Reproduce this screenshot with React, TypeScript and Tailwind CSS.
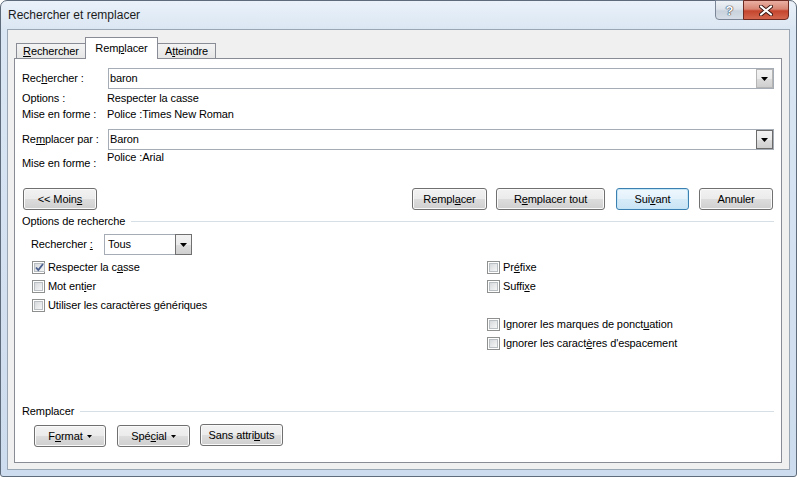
import React from "react";

const btnBg = "bg-[linear-gradient(#f2f2f2,#ebebeb_50%,#dddddd_50%,#cfcfcf)]";

function Arrow({ small }: { small?: boolean }) {
  return small ? (
    <svg width="5" height="3" viewBox="0 0 5 3" className="ml-[4px]">
      <path d="M0 0H5L2.5 3Z" fill="#000" />
    </svg>
  ) : (
    <svg width="7" height="4" viewBox="0 0 7 4">
      <path d="M0 0H7L3.5 4Z" fill="#000" />
    </svg>
  );
}

function Btn({ children, className, focused }: { children: React.ReactNode; className: string; focused?: boolean }) {
  return (
    <div
      className={
        "h-[22px] rounded-[3px] border flex items-center justify-center " +
        (focused
          ? "border-[#3c7fb1] bg-[linear-gradient(#eef7fd,#e3f1fb_50%,#d6ebf8_50%,#c9e3f5)] shadow-[inset_0_0_0_1px_#c4e5f6] "
          : "border-[#707070] " + btnBg + " shadow-[inset_0_0_0_1px_#fafafa] ") +
        className
      }
    >
      {children}
    </div>
  );
}

function Combo({ value, hot }: { value: string; hot?: boolean }) {
  return (
    <div className="flex-1 h-[21px] border border-[#a5acb5] bg-white flex items-center">
      <span className="flex-1 pl-[1px]">{value}</span>
      <div
        className={
          "w-[17px] h-[19px] border flex items-center justify-center " +
          (hot ? "border-[#6b6b6b] " : "border-[#b5b5b5] ") +
          btnBg
        }
      >
        <Arrow />
      </div>
    </div>
  );
}

function Check({ label, checked }: { label: React.ReactNode; checked?: boolean }) {
  return (
    <div className="h-[19px] flex items-center gap-[3px]">
      <span className="w-[13px] h-[13px] border border-[#8e8f8f] bg-white p-[1px] flex">
        <span className="flex-1 border border-[#b9bec3] bg-[linear-gradient(135deg,#d6d9dc,#f6f6f6)] flex items-center justify-center">
          {checked && (
            <svg width="9" height="9" viewBox="0 0 9 9">
              <path d="M1 4.5L3.3 7L8 1" stroke="#4a5f8e" strokeWidth="1.8" fill="none" />
            </svg>
          )}
        </span>
      </span>
      <span>{label}</span>
    </div>
  );
}

function Group({ title }: { title: string }) {
  return (
    <div className="h-[15px] flex items-center pl-[7px] pr-[7px]">
      <span>{title}</span>
      <div className="flex-1 h-px bg-[#d5dfe5] ml-[6px]" />
    </div>
  );
}

export default function App() {
  return (
    <div className="w-[797px] h-[477px] overflow-hidden bg-white font-['Liberation_Sans',Arial,sans-serif] text-[11px] tracking-[-0.1px] text-black leading-[15px] [&_u]:underline-offset-[1px]">
      <div className="w-[797px] h-[477px] flex flex-col rounded-t-[7px] rounded-b-[3px] border border-[#5d6b7a] bg-[linear-gradient(#eaf1f9,#dae6f3_30px,#cddcee)]">
        {/* Title bar */}
        <div className="h-[28px] flex items-start pl-[7px] pr-[7px]">
          <span className="text-[12px] tracking-normal leading-[14px] mt-[7px] text-[#1b1b1b]">Rechercher et remplacer</span>
          <div className="flex-1" />
          <div className="flex -mt-px">
            <div className="w-[29px] h-[20px] rounded-bl-[4px] border border-[#7b8796] bg-[linear-gradient(#eef2f6,#dde3ea_45%,#c9d2dc_55%,#d6dde6)] flex items-center justify-center">
              <span className="text-[13px] font-bold text-white leading-[13px] [text-shadow:0_0_1px_#2e3a48,0_0_1px_#2e3a48,0_0_1px_#2e3a48]">?</span>
            </div>
            <div className="w-[46px] h-[20px] -ml-px rounded-br-[4px] border border-[#6d2a22] bg-[linear-gradient(#eab0a3,#d88473_45%,#c5452d_55%,#d4674f)] flex items-center justify-center">
              <svg width="14" height="11" viewBox="0 0 14 11">
                <path d="M2 1.5L12 9.5M12 1.5L2 9.5" stroke="#3a1612" strokeWidth="4" strokeLinecap="round" />
                <path d="M2 1.5L12 9.5M12 1.5L2 9.5" stroke="#fff" strokeWidth="2.2" strokeLinecap="round" />
              </svg>
            </div>
          </div>
        </div>

        {/* Client area */}
        <div className="mx-[6px] h-[441px] border border-[#9aa6b4] bg-[#f0f0f0] pt-[7px] pl-[6px] pr-[7px] pb-[6px] flex flex-col">
          {/* Tabs */}
          <div className="h-[21px] flex items-end pl-[2px]">
            <div className="w-[69px] h-[15px] border-l border-t border-[#898c95] bg-[linear-gradient(#f3f3f3,#e6e6e6)] flex items-center justify-center">
              <span><u>R</u>echercher</span>
            </div>
            <div className="w-[73px] h-[22px] -mb-px relative z-10 border-l border-t border-r border-[#898c95] bg-white flex items-start justify-center pt-[3px]">
              <span>Rem<u>p</u>lacer</span>
            </div>
            <div className="w-[58px] h-[15px] border-t border-r border-[#898c95] bg-[linear-gradient(#f3f3f3,#e6e6e6)] flex items-center justify-center">
              <span>A<u>t</u>teindre</span>
            </div>
          </div>

          {/* Panel */}
          <div className="flex-1 border border-[#898c95] bg-white flex flex-col">
            <div className="mt-[9px] h-[21px] flex items-center pl-[7px] pr-[7px]">
              <span className="w-[86px]">Rec<u>h</u>ercher :</span>
              <Combo value="baron" />
            </div>
            <div className="mt-[2px] h-[15px] flex items-center pl-[7px]">
              <span className="w-[85px]">Options :</span>
              <span>Respecter la casse</span>
            </div>
            <div className="mt-[1px] h-[15px] flex items-center pl-[7px]">
              <span className="w-[85px]">Mise en forme :</span>
              <span>Police :Times New Roman</span>
            </div>
            <div className="mt-[7px] h-[21px] flex items-center pl-[7px] pr-[7px]">
              <span className="w-[86px]">Re<u>m</u>placer par :</span>
              <Combo value="Baron" hot />
            </div>
            <div className="h-[21px] flex items-start pl-[7px]">
              <span className="w-[85px] mt-[6px]">Mise en forme :</span>
              <span>Police :Arial</span>
            </div>

            {/* Action buttons */}
            <div className="mt-[17px] h-[22px] flex items-center pl-[8px] pr-[8px]">
              <Btn className="w-[74px]">&lt;&lt; Moin<u>s</u></Btn>
              <div className="flex-1" />
              <Btn className="w-[75px]">Rempl<u>a</u>cer</Btn>
              <Btn className="w-[109px] ml-[9px]">R<u>e</u>mplacer tout</Btn>
              <Btn className="w-[73px] ml-[11px]" focused>Sui<u>v</u>ant</Btn>
              <Btn className="w-[74px] ml-[10px]">Annuler</Btn>
            </div>

            <div className="mt-[4px]">
              <Group title="Options de recherche" />
            </div>

            <div className="mt-[5px] h-[21px] flex items-center pl-[16px]">
              <span className="w-[73px]">Rechercher <u>:</u></span>
              <div className="w-[88px] h-[21px] border border-[#a5acb5] bg-white flex items-center">
                <span className="flex-1 pl-[3px]">Tous</span>
                <div className="w-[17px] h-[21px] -mr-px border border-[#707070] bg-[linear-gradient(#f2f2f2,#ebebeb_50%,#dddddd_50%,#cfcfcf)] flex items-center justify-center">
                  <Arrow />
                </div>
              </div>
            </div>

            {/* Checkboxes */}
            <div className="mt-[3px] flex pl-[17px]">
              <div className="w-[455px] flex flex-col">
                <Check checked label={<>Respecter la c<u>a</u>sse</>} />
                <Check label={<>Mot ent<u>i</u>er</>} />
                <Check label={<>Utiliser les caractères <u>g</u>énériques</>} />
              </div>
              <div className="flex flex-col">
                <Check label={<>Pr<u>é</u>fixe</>} />
                <Check label={<>Suffi<u>x</u>e</>} />
                <div className="h-[19px]" />
                <Check label={<>Ignorer les marques de ponct<u>u</u>ation</>} />
                <Check label={<>Ignorer les caract<u>è</u>res d'espacement</>} />
              </div>
            </div>

            <div className="mt-[51px]">
              <Group title="Remplacer" />
            </div>

            <div className="mt-[5px] flex items-start pl-[19px]">
              <Btn className="w-[72px] mt-[1px]">F<u>o</u>rmat<Arrow small /></Btn>
              <Btn className="w-[73px] mt-[1px] ml-[11px]">Spé<u>c</u>ial<Arrow small /></Btn>
              <Btn className="w-[83px] ml-[10px]">Sans attri<u>b</u>uts</Btn>
            </div>
          </div>
        </div>
      </div>
    </div>
  );
}
